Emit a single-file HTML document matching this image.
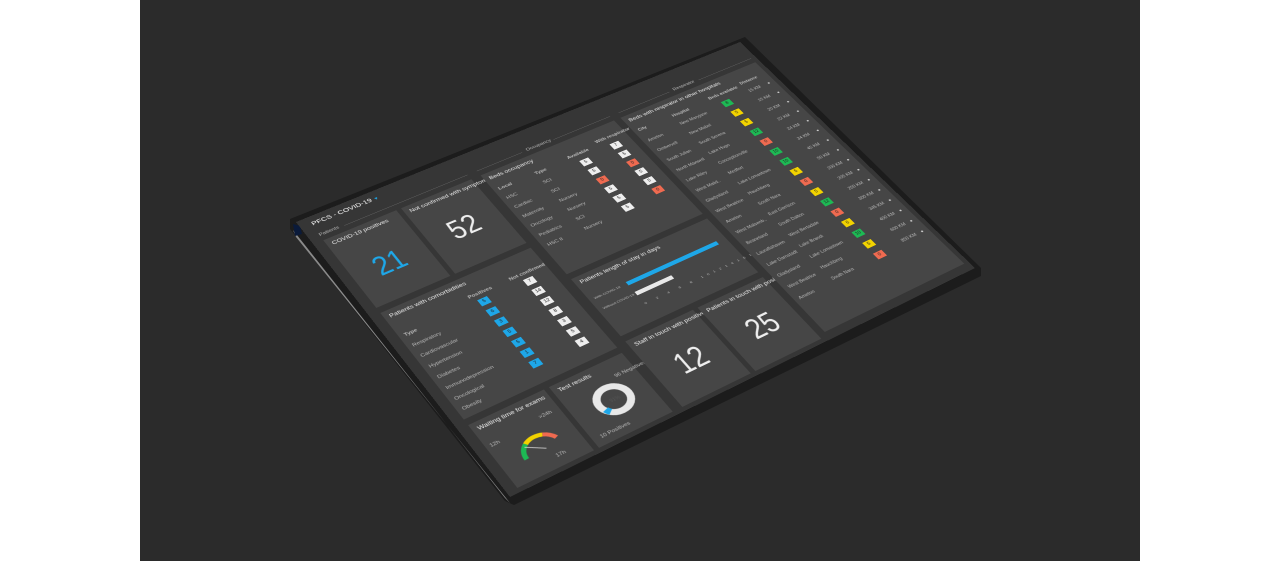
<!DOCTYPE html>
<html><head><meta charset="utf-8"><style>
html,body{margin:0;padding:0;width:1280px;height:561px;overflow:hidden;background:#fff;font-family:"Liberation Sans",sans-serif}
#bg{position:absolute;left:140px;top:0;width:1000px;height:561px;background:#2b2b2b}
#dev{position:absolute;left:0;top:0}
#scr{position:absolute;left:0;top:0;width:1000px;height:780px;background:#363636;transform-origin:0 0;
transform:matrix3d(0.5277,-0.17525,0,0.00011312, 0.20744,0.28736,0,-0.00013119, 0,0,1,0, 296,222,0,1);color:#ddd;overflow:hidden}
.t{position:absolute;background:#464646}
.h{position:absolute;left:10px;top:8px;font-size:13px;color:#eee;white-space:nowrap}
.big{position:absolute;font-size:70px;color:#eee;font-weight:300;transform:scaleX(0.75);transform-origin:0 0}
.lab{position:absolute;font-size:11px;color:#bbb;white-space:nowrap}
.sq{position:absolute;width:20px;height:18px;font-size:10px;text-align:center;line-height:18px;color:#222;background:#eee}
.b{background:#1ea7e8}.g{background:#1db954}.y{background:#f2d300}.r{background:#ef6a50}
.col{position:absolute;font-size:10px;line-height:34px;color:#bbb;white-space:nowrap}
</style></head><body>
<div id="bg"></div>
<svg id="dev" width="1280" height="561">
<polygon points="290,219 745,37 981,268 981,276 514,505 505,501 290,229" fill="#1c1c1c"/>
<polygon points="293,230 505,498 510,503 296,237" fill="#8a8a8a"/>
<polygon points="293,224 300,226 302,234 295,236" fill="#0a1a3a"/>
</svg>
<div id="scr">
 <div style="position:absolute;left:22px;top:12px;font-size:15px;color:#fff">PFCS - COVID-19 <span style="color:#1ea7e8;font-size:10px">▼</span></div>
 <div class="lab" style="left:20px;top:48px">Patients</div><div style="position:absolute;left:70px;top:55px;width:260px;height:1px;background:#666"></div>
 <div class="lab" style="left:460px;top:48px">Occupancy</div><div style="position:absolute;left:350px;top:55px;width:100px;height:1px;background:#666"></div><div style="position:absolute;left:520px;top:55px;width:130px;height:1px;background:#666"></div>
 <div class="lab" style="left:800px;top:48px">Respirator</div><div style="position:absolute;left:670px;top:55px;width:120px;height:1px;background:#666"></div><div style="position:absolute;left:860px;top:55px;width:130px;height:1px;background:#666"></div>

 <div class="t" style="left:20px;top:70px;width:150px;height:205px"><div class="h">COVID-19 positives</div><div class="big" style="left:45px;top:75px;color:#1ea7e8">21</div></div>
 <div class="t" style="left:180px;top:70px;width:150px;height:205px"><div class="h">Not confirmed with symptoms</div><div class="big" style="left:45px;top:65px">52</div></div>

 <div class="t" style="left:20px;top:290px;width:310px;height:300px"><div class="h">Patients with comorbidities</div>
  <div class="lab" style="left:150px;top:45px;font-weight:bold">Positives</div><div class="lab" style="left:235px;top:45px;font-weight:bold">Not confirmed</div>
  <div class="lab" style="left:10px;top:65px;font-weight:bold">Type</div>
  <div class="lab" style="left:10px;top:95px">Respiratory</div><div class="lab" style="left:10px;top:125px">Cardiovascular</div><div class="lab" style="left:10px;top:155px">Hypertension</div><div class="lab" style="left:10px;top:185px">Diabetes</div><div class="lab" style="left:10px;top:215px">Immunodepression</div><div class="lab" style="left:10px;top:245px">Oncological</div><div class="lab" style="left:10px;top:272px">Obesity</div>
  <div class="sq b" style="left:160px;top:65px">5</div><div class="sq b" style="left:160px;top:95px">6</div><div class="sq b" style="left:160px;top:125px">3</div><div class="sq b" style="left:160px;top:155px">5</div><div class="sq b" style="left:160px;top:185px">5</div><div class="sq b" style="left:160px;top:215px">1</div><div class="sq b" style="left:160px;top:245px">7</div>
  <div class="sq" style="left:255px;top:65px">7</div><div class="sq" style="left:255px;top:95px">14</div><div class="sq" style="left:255px;top:125px">12</div><div class="sq" style="left:255px;top:155px">8</div><div class="sq" style="left:255px;top:185px">3</div><div class="sq" style="left:255px;top:215px">5</div><div class="sq" style="left:255px;top:245px">4</div>
 </div>

 <div class="t" style="left:20px;top:605px;width:150px;height:165px"><div class="h">Waiting time for exams</div>
  <svg style="position:absolute;left:30px;top:55px" width="100" height="80"><path d="M15 65 A35 35 0 0 1 30 35" stroke="#1db954" stroke-width="9" fill="none"/><path d="M30 35 A35 35 0 0 1 65 32" stroke="#f2d300" stroke-width="9" fill="none"/><path d="M65 32 A35 35 0 0 1 82 50" stroke="#ef6a50" stroke-width="9" fill="none"/><line x1="25" y1="40" x2="55" y2="62" stroke="#ccc" stroke-width="2"/></svg>
  <div class="lab" style="left:8px;top:55px">12h</div><div class="lab" style="left:110px;top:45px">&gt;24h</div>
  <div class="lab" style="left:90px;top:135px">17h</div></div>
 <div class="t" style="left:180px;top:605px;width:150px;height:165px"><div class="h">Test results</div>
  <svg style="position:absolute;left:35px;top:40px" width="90" height="90"><circle cx="45" cy="45" r="30" stroke="#e8e8e8" stroke-width="14" fill="none"/><path d="M25 67 A30 30 0 0 1 20 58" stroke="#1ea7e8" stroke-width="14" fill="none"/><text x="37" y="49" font-size="10" fill="#555">91%</text></svg>
  <div class="lab" style="left:110px;top:35px">96 Negatives</div><div class="lab" style="left:15px;top:140px">10 Positives</div></div>

 <div class="t" style="left:350px;top:70px;width:300px;height:315px"><div class="h">Beds occupancy</div>
  <div class="lab" style="left:10px;top:45px;font-weight:bold">Local</div><div class="lab" style="left:90px;top:45px;font-weight:bold">Type</div><div class="lab" style="left:165px;top:40px;font-weight:bold">Available</div><div class="lab" style="left:235px;top:30px;font-weight:bold">With respirator</div>
  <div class="lab" style="left:10px;top:75px">HSC</div><div class="lab" style="left:10px;top:105px">Cardiac</div><div class="lab" style="left:10px;top:135px">Maternity</div><div class="lab" style="left:10px;top:165px">Oncology</div><div class="lab" style="left:10px;top:195px">Pediatrics</div><div class="lab" style="left:10px;top:225px">HSC II</div>
  <div class="lab" style="left:90px;top:75px">SCI</div><div class="lab" style="left:90px;top:105px">SCI</div><div class="lab" style="left:90px;top:135px">Nursery</div><div class="lab" style="left:90px;top:165px">Nursery</div><div class="lab" style="left:90px;top:195px">SCI</div><div class="lab" style="left:90px;top:225px">Nursery</div>
  <div class="sq" style="left:180px;top:65px">5</div><div class="sq" style="left:180px;top:95px">5</div><div class="sq r" style="left:180px;top:125px">0</div><div class="sq" style="left:180px;top:155px">5</div><div class="sq" style="left:180px;top:185px">5</div><div class="sq" style="left:180px;top:215px">5</div>
  <div class="sq" style="left:255px;top:55px">7</div><div class="sq" style="left:255px;top:85px">5</div><div class="sq r" style="left:255px;top:115px">0</div><div class="sq" style="left:255px;top:145px">5</div><div class="sq" style="left:255px;top:175px">5</div><div class="sq r" style="left:255px;top:205px">0</div>
 </div>

 <div class="t" style="left:350px;top:400px;width:300px;height:170px"><div class="h">Patients length of stay in days</div>
  <div style="position:absolute;left:80px;top:60px;width:200px;height:10px;background:#1ea7e8"></div>
  <div style="position:absolute;left:80px;top:90px;width:80px;height:10px;background:#e8e8e8"></div>
  <div class="lab" style="left:10px;top:60px;font-size:8px">With COVID-19</div><div class="lab" style="left:10px;top:90px;font-size:8px">Without COVID-19</div>
  <div class="lab" style="left:80px;top:120px;font-size:8px;letter-spacing:9px">0 2 4 6 8 1012141618</div></div>

 <div class="t" style="left:350px;top:585px;width:145px;height:185px"><div class="h">Staff in touch with positives</div><div class="big" style="left:45px;top:60px">12</div></div>
 <div class="t" style="left:505px;top:585px;width:145px;height:185px"><div class="h">Patients in touch with positives</div><div class="big" style="left:45px;top:60px">25</div></div>

 <div class="t" style="left:665px;top:70px;width:325px;height:690px"><div class="h">Beds with respirator in other hospitals</div>
  <div class="lab" style="left:10px;top:45px;font-weight:bold;font-size:10px">City</div><div class="lab" style="left:90px;top:45px;font-weight:bold;font-size:10px">Hospital</div><div class="lab" style="left:180px;top:40px;font-weight:bold;font-size:10px">Beds available</div><div class="lab" style="left:260px;top:35px;font-weight:bold;font-size:10px">Distance</div>
  <div class="col" style="left:10px;top:70px">Ameton<br>Ombervell<br>South Julian<br>North Maxwell<br>Lake Riley<br>West Malid..<br>Gladysland<br>West Beatrice<br>Ameton<br>West Malsenb..<br>Beaneland<br>Lauraflahaven<br>Lake Darnstadt<br>Gladysland<br>West Beatrice<br>Ameton</div>
  <div class="col" style="left:90px;top:62px">New Maryjane<br>New Mabel<br>South Serena<br>Lake Hugo<br>Conceptionville<br>Medfort<br>Lake Lomastown<br>Hauchberg<br>South Nara<br>East Garrison<br>South Dalton<br>West Bertadale<br>Lake Brandi<br>Lake Lomastown<br>Hauchberg<br>South Nara</div>
  <div class="sq g" style="left:195px;top:66px">8</div><div class="sq y" style="left:195px;top:100px">5</div><div class="sq y" style="left:195px;top:134px">5</div><div class="sq g" style="left:195px;top:168px">12</div><div class="sq r" style="left:195px;top:202px">0</div><div class="sq g" style="left:195px;top:236px">10</div><div class="sq g" style="left:195px;top:270px">10</div><div class="sq y" style="left:195px;top:304px">5</div><div class="sq r" style="left:195px;top:338px">0</div><div class="sq y" style="left:195px;top:372px">5</div><div class="sq g" style="left:195px;top:406px">12</div><div class="sq r" style="left:195px;top:440px">0</div><div class="sq y" style="left:195px;top:474px">6</div><div class="sq g" style="left:195px;top:508px">10</div><div class="sq y" style="left:195px;top:542px">5</div><div class="sq r" style="left:195px;top:576px">0</div>
  <div class="col" style="left:262px;top:52px">15 KM<br>15 KM<br>20 KM<br>22 KM<br>24 KM<br>34 KM<br>45 KM<br>50 KM<br>200 KM<br>205 KM<br>250 KM<br>300 KM<br>345 KM<br>400 KM<br>600 KM<br>850 KM</div>
  <div class="col" style="left:308px;top:52px;color:#ccc">●<br>●<br>●<br>●<br>●<br>●<br>●<br>●<br>●<br>●<br>●<br>●<br>●<br>●<br>●<br>●</div>
 </div>
</div>
</body></html>
